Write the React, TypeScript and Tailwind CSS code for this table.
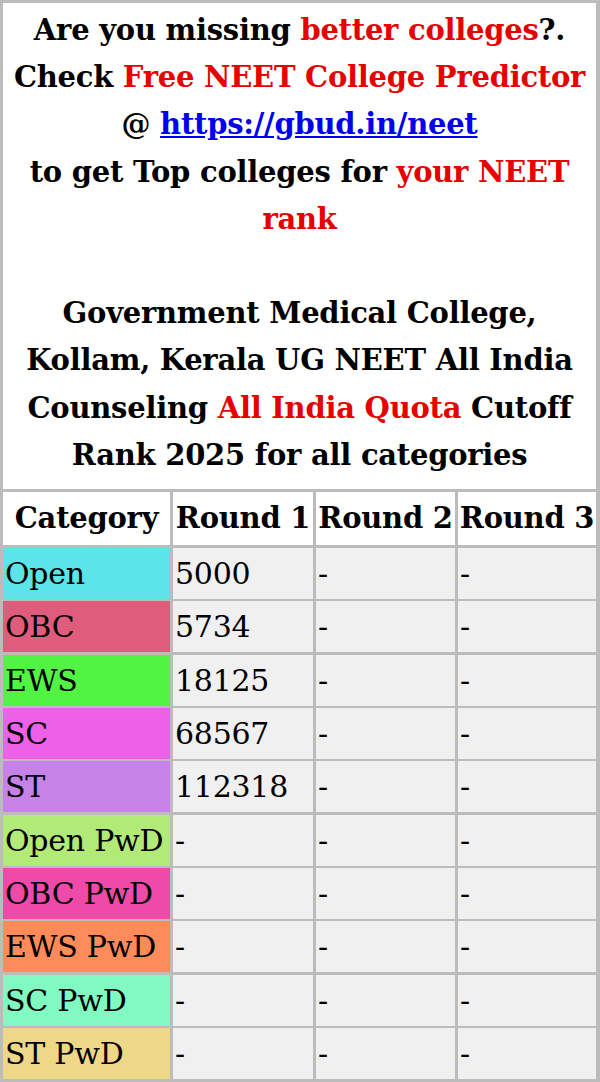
export default function App() {
  const rows = [
    { cat: 'Open', bg: 'bg-[#5ce5e8]', r1: '5000' },
    { cat: 'OBC', bg: 'bg-[#e05c7c]', r1: '5734' },
    { cat: 'EWS', bg: 'bg-[#52f444]', r1: '18125' },
    { cat: 'SC', bg: 'bg-[#ee60e8]', r1: '68567' },
    { cat: 'ST', bg: 'bg-[#c682e6]', r1: '112318' },
    { cat: 'Open PwD', bg: 'bg-[#b2ea78]', r1: '-' },
    { cat: 'OBC PwD', bg: 'bg-[#f04aa8]', r1: '-' },
    { cat: 'EWS PwD', bg: 'bg-[#ff8a5a]', r1: '-' },
    { cat: 'SC PwD', bg: 'bg-[#80fac0]', r1: '-' },
    { cat: 'ST PwD', bg: 'bg-[#eed888]', r1: '-' },
  ]

  return (
    <div className="w-[600px] min-h-screen bg-white font-['DejaVu_Serif',serif] text-black">
      <div className="bg-[#bcbcbc] p-[3px] grid grid-cols-[167px_140px_139px_138px] gap-x-[3px]">
        {/* Heading */}
        <div className="col-span-4 bg-white text-center font-bold text-[29px] leading-[47.2px] tracking-[-0.25px] pt-[4px] pb-[10px]">
          <div className="whitespace-nowrap">
            Are you missing <span className="text-[#e60000]">better colleges</span>?.
          </div>
          <div className="whitespace-nowrap">
            Check <span className="text-[#e60000]">Free NEET College Predictor</span>
          </div>
          <div className="whitespace-nowrap">
            @ <a href="#" className="text-[#0000ee] underline">https://gbud.in/neet</a>
          </div>
          <div className="whitespace-nowrap">
            to get Top colleges for <span className="text-[#e60000]">your NEET</span>
          </div>
          <div className="text-[#e60000]">rank</div>
          <div>&nbsp;</div>
          <div className="whitespace-nowrap">Government Medical College,</div>
          <div className="whitespace-nowrap">Kollam, Kerala UG NEET All India</div>
          <div className="whitespace-nowrap">
            Counseling <span className="text-[#e60000]">All India Quota</span> Cutoff
          </div>
          <div className="whitespace-nowrap">Rank 2025 for all categories</div>
        </div>

        {/* Header row */}
        <div className="col-span-4 grid grid-cols-[167px_140px_139px_138px] gap-x-[3px] mt-[3px] mb-[3px]">
          {['Category', 'Round 1', 'Round 2', 'Round 3'].map((h) => (
            <div
              key={h}
              className="bg-white h-[53px] flex items-center justify-center font-bold text-[29px] tracking-[-0.25px] whitespace-nowrap"
            >
              {h}
            </div>
          ))}
        </div>

        {/* Data rows */}
        <div className="col-span-4 grid grid-cols-[167px_140px_139px_138px] gap-x-[3px] gap-y-[2.33px]">
          {rows.map((r) => (
            <div key={r.cat} className="contents">
              <div className={`${r.bg} h-[51px] flex items-center px-[2px] text-[30px] tracking-[-0.25px] whitespace-nowrap`}>
                {r.cat}
              </div>
              <div className="bg-[#f0f0f0] h-[51px] flex items-center px-[2px] text-[30px] tracking-[-0.25px]">
                {r.r1}
              </div>
              <div className="bg-[#f0f0f0] h-[51px] flex items-center px-[2px] text-[30px]">-</div>
              <div className="bg-[#f0f0f0] h-[51px] flex items-center px-[2px] text-[30px]">-</div>
            </div>
          ))}
        </div>
      </div>
    </div>
  )
}
